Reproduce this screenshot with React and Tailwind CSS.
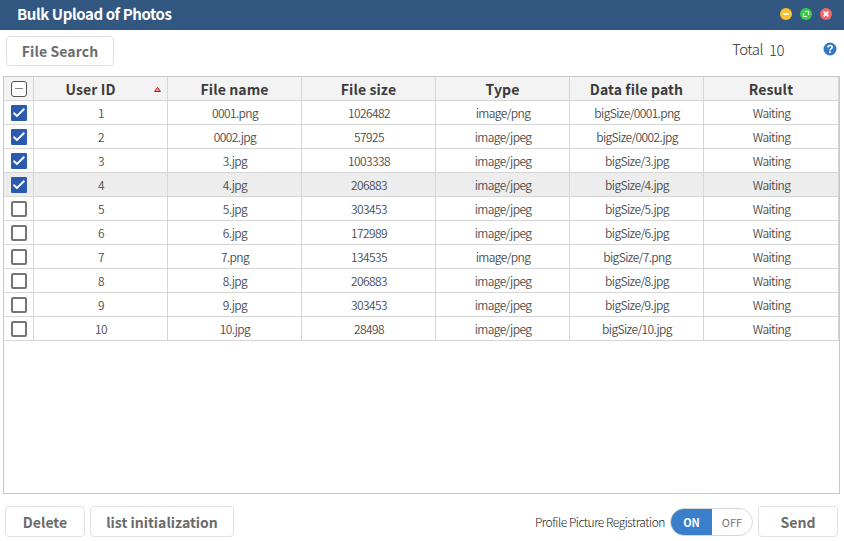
import React from "react";

const files = [
  ["1", "0001.png", "1026482", "image/png", true],
  ["2", "0002.jpg", "57925", "image/jpeg", true],
  ["3", "3.jpg", "1003338", "image/jpeg", true],
  ["4", "4.jpg", "206883", "image/jpeg", true],
  ["5", "5.jpg", "303453", "image/jpeg", false],
  ["6", "6.jpg", "172989", "image/jpeg", false],
  ["7", "7.png", "134535", "image/png", false],
  ["8", "8.jpg", "206883", "image/jpeg", false],
  ["9", "9.jpg", "303453", "image/jpeg", false],
  ["10", "10.jpg", "28498", "image/jpeg", false],
];

const headers = ["User ID", "File name", "File size", "Type", "Data file path", "Result"];

function Button({ className, children }) {
  return (
    <button
      className={`flex shrink-0 items-center justify-center whitespace-nowrap rounded-[4px] border border-[#e1e1e1] bg-white text-[14px] font-bold text-[#6b6b6b] ${className}`}
    >
      {children}
    </button>
  );
}

function Check({ checked }) {
  if (!checked) {
    return <span className="size-4 rounded-[2px] border-2 border-[#757575] bg-white" />;
  }
  return (
    <span className="size-4 rounded-[1px] bg-[#2c5aae]">
      <svg viewBox="0 0 16 16" className="size-4" fill="none" stroke="#fff" strokeWidth="1.9">
        <path d="M2.5 7.8 5.9 11 13.4 3.8" />
      </svg>
    </span>
  );
}

function WindowDot({ color, children }) {
  return (
    <svg viewBox="0 0 12 12" className="size-3" fill="none" stroke="#fff">
      <circle cx="6" cy="6" r="6" fill={color} stroke="none" />
      {children}
    </svg>
  );
}

export default function App() {
  return (
    <div className="flex h-[541px] w-[844px] flex-col overflow-hidden bg-white font-['Noto_Sans_CJK_KR',sans-serif]">
      <header className="flex h-[30px] shrink-0 items-center justify-between bg-[#325781] pl-[17px] pr-3">
        <h1 className="pb-0.5 text-[15px] font-bold leading-[28px] tracking-[-0.42px] text-white">Bulk Upload of Photos</h1>
        <div className="flex gap-2 pb-0.5">
          <WindowDot color="#fbc22f">
            <path d="M3 6H9" strokeWidth="1.7" />
          </WindowDot>
          <WindowDot color="#3bcb4b">
            <path d="M5 3.5H8.5V6.8M3.5 5.2V8.5H7" strokeWidth="1.1" />
          </WindowDot>
          <WindowDot color="#f2686a">
            <path d="M3.6 3.6 8.4 8.4M8.4 3.6 3.6 8.4" strokeWidth="1.8" />
          </WindowDot>
        </div>
      </header>

      <div className="flex h-[46px] shrink-0 items-start pl-1.5 pr-[7px] pt-1.5">
        <Button className="h-[30px] w-[108px] tracking-[0.1px]">File Search</Button>
        <div className="ml-auto flex items-start text-[15px] font-light leading-[22px] tracking-[-0.5px] text-[#333]">
          <span className="pt-0.5">Total</span>
          <span className="ml-[6px] pt-[3px]">10</span>
        </div>
        <svg viewBox="0 0 14 14" className="ml-[39px] mt-1.5 size-3.5" fill="none">
          <circle cx="7" cy="7" r="6.5" fill="#2f79c6" />
          <path d="M4.9 5.4C4.9 2.8 9.2 2.8 9.2 5.3 9.2 6.8 7 6.8 7 8.4" stroke="#fff" strokeWidth="1.6" />
          <path d="M7 9.3V11" stroke="#fff" strokeWidth="1.7" />
        </svg>
      </div>

      <section className="ml-[3px] h-[418px] w-[837px] shrink-0 border border-[#c8c8c8]">
        <div className="grid h-6 grid-cols-[30px_repeat(5,134px)_135px] border-b border-[#d6d6d6] bg-[#f3f3f3]">
          <div className="flex items-center justify-center border-r border-[#d6d6d6]">
            <span className="flex size-4 items-center justify-center rounded-[3px] border border-[#555] bg-white">
              <span className="h-px w-2 bg-[#888]" />
            </span>
          </div>
          {headers.map((label, i) => (
            <div
              key={label}
              className="relative flex items-center justify-center border-r border-[#d6d6d6] pt-px text-[14px] font-bold leading-[22px] tracking-[0.1px] text-[#3c3c3c]"
            >
              <span className={i === 0 ? "pr-5" : ""}>{label}</span>
              {i === 0 && (
                <svg viewBox="0 0 7 5" className="absolute right-[6px] top-[10px] h-[5px] w-[7px]">
                  <path d="M3.5.5 6.5 4.5H.5Z" fill="#f29a9a" stroke="#cc1111" />
                </svg>
              )}
            </div>
          ))}
        </div>
        {files.map(([id, name, size, type, checked]) => (
          <div
            key={id}
            className={`grid h-6 grid-cols-[30px_repeat(5,134px)_135px] border-b border-[#d6d6d6] ${id === "4" ? "bg-[#ededed]" : "bg-white"}`}
          >
            <div className="flex items-center justify-center border-r border-[#d6d6d6]">
              <Check checked={checked} />
            </div>
            {[id, name, size, type, "bigSize/" + name, "Waiting"].map((value, i) => (
              <div
                key={i}
                className="flex items-center justify-center border-r border-[#d6d6d6] pl-px text-[12px] font-[350] leading-[21px] tracking-[-0.62px] text-[#4c4c4c]"
              >
                {value}
              </div>
            ))}
          </div>
        ))}
      </section>

      <footer className="flex items-start pl-[5px] pr-1.5 pt-3">
        <Button className="h-[31px] w-20 pt-0.5">Delete</Button>
        <Button className="ml-[5px] h-[31px] w-36 pt-0.5">list initialization</Button>
        <span className="ml-auto pt-[5px] text-[12px] font-light leading-[22px] tracking-[-0.46px] text-[#222]">Profile Picture Registration</span>
        <div className="ml-[5px] mt-[2px] flex h-7 w-[83px] shrink-0 overflow-hidden rounded-full border border-[#d8d8d8] text-[11px] leading-[27px]">
          <span className="w-[41px] bg-[#397fca] text-center font-bold text-white">ON</span>
          <span className="w-10 text-center text-[#777]">OFF</span>
        </div>
        <Button className="ml-[5px] h-[31px] w-20 pt-0.5">Send</Button>
      </footer>
    </div>
  );
}
